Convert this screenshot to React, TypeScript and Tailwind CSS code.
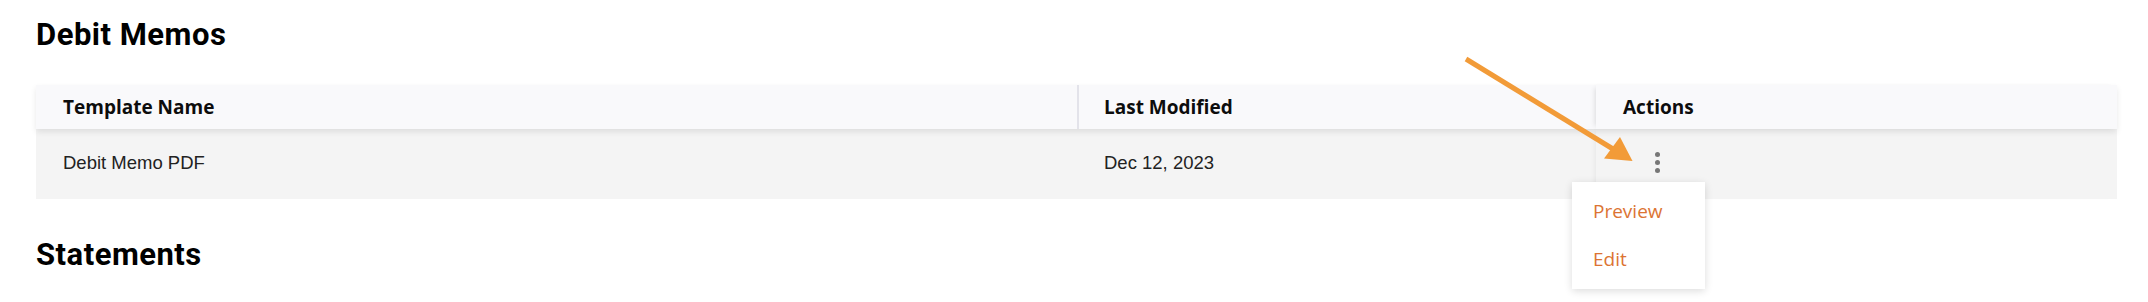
import React from "react";

function Kebab() {
  return (
    <div className="flex flex-col gap-[3px] mb-[3px]">
      <span className="block w-[5px] h-[5px] rounded-full bg-[#777777]" />
      <span className="block w-[5px] h-[5px] rounded-full bg-[#777777]" />
      <span className="block w-[5px] h-[5px] rounded-full bg-[#777777]" />
    </div>
  );
}

export default function App() {
  return (
    <div className="relative bg-white w-[2148px] h-[302px] overflow-hidden pl-[36px] pr-[31px] pt-[17px]">
      <h2 className="font-['Roboto',sans-serif] font-bold text-[31px] leading-[36px] tracking-[0.5px] text-black">
        Debit Memos
      </h2>

      <div className="mt-[32px] w-[2081px]">
        <div className="relative z-10 grid grid-cols-[1041px_519px_1fr] h-[44px] bg-[#f9f9fb] shadow-[0_3px_6px_rgba(0,0,0,0.09)] font-['Open_Sans',sans-serif] font-bold text-[19px] leading-[44px] text-[#0d0d0d]">
          <div className="pl-[27px]">Template Name</div>
          <div className="pl-[25px] border-l-2 border-[#e3e3ea]">Last Modified</div>
          <div className="pl-[27px] shadow-[-4px_0_5px_-3px_rgba(0,0,0,0.12)]">Actions</div>
        </div>
        <div className="grid grid-cols-[1041px_519px_1fr] h-[70px] bg-[#f4f4f4] font-['Liberation_Sans',Arial,sans-serif] text-[18.5px] text-[#222222]">
          <div className="pl-[27px] flex items-center pb-[2px]">Debit Memo PDF</div>
          <div className="pl-[27px] flex items-center pb-[2px]">Dec 12, 2023</div>
          <div className="relative pl-[27px] flex items-center shadow-[-4px_0_5px_-3px_rgba(0,0,0,0.06)]">
            <button className="ml-[22px] w-[24px] h-[30px] flex items-center justify-center">
              <Kebab />
            </button>
            <div className="absolute z-20 left-[-24px] top-[53px] w-[133px] bg-white shadow-[0_2px_8px_rgba(0,0,0,0.14)] pt-[5px] pb-[6px] font-['Open_Sans',sans-serif] text-[19px] text-[#dc7433]">
              <div className="h-[48px] leading-[48px] px-[21px]">Preview</div>
              <div className="h-[48px] leading-[48px] px-[21px]">Edit</div>
            </div>
          </div>
        </div>
      </div>

      <h2 className="mt-[38px] font-['Roboto',sans-serif] font-bold text-[31px] leading-[36px] tracking-[0.5px] text-black">
        Statements
      </h2>

      <svg
        className="absolute left-0 top-0 pointer-events-none z-30"
        width="2148"
        height="302"
        viewBox="0 0 2148 302"
      >
        <line x1="1466" y1="59" x2="1613" y2="149" stroke="#f29b38" strokeWidth="5" strokeLinecap="butt" />
        <polygon points="1632.5,161 1604,158.5 1620,137" fill="#f29b38" />
      </svg>
    </div>
  );
}
